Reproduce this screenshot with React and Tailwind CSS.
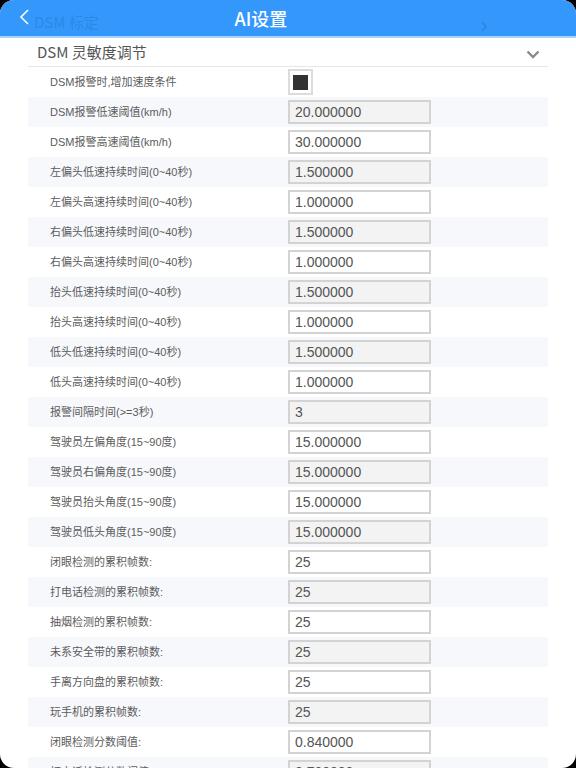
import React from "react";

const rows = [
  ["DSM报警时,增加速度条件", null],
  ["DSM报警低速阈值(km/h)", "20.000000"],
  ["DSM报警高速阈值(km/h)", "30.000000"],
  ["左偏头低速持续时间(0~40秒)", "1.500000"],
  ["左偏头高速持续时间(0~40秒)", "1.000000"],
  ["右偏头低速持续时间(0~40秒)", "1.500000"],
  ["右偏头高速持续时间(0~40秒)", "1.000000"],
  ["抬头低速持续时间(0~40秒)", "1.500000"],
  ["抬头高速持续时间(0~40秒)", "1.000000"],
  ["低头低速持续时间(0~40秒)", "1.500000"],
  ["低头高速持续时间(0~40秒)", "1.000000"],
  ["报警间隔时间(>=3秒)", "3"],
  ["驾驶员左偏角度(15~90度)", "15.000000"],
  ["驾驶员右偏角度(15~90度)", "15.000000"],
  ["驾驶员抬头角度(15~90度)", "15.000000"],
  ["驾驶员低头角度(15~90度)", "15.000000"],
  ["闭眼检测的累积帧数:", "25"],
  ["打电话检测的累积帧数:", "25"],
  ["抽烟检测的累积帧数:", "25"],
  ["未系安全带的累积帧数:", "25"],
  ["手离方向盘的累积帧数:", "25"],
  ["玩手机的累积帧数:", "25"],
  ["闭眼检测分数阈值:", "0.840000"],
  ["打电话检测分数阈值:", "0.700000"],
];

const font = { fontFamily: '"Liberation Sans", "Noto Sans CJK SC", sans-serif' };

export default function App() {
  return (
    <div className="w-[576px] h-[768px] bg-black overflow-hidden" style={font}>
      <div className="w-full h-full bg-white rounded-[14px] overflow-hidden flex flex-col">
        <div className="relative h-[38px] shrink-0 bg-[#3497fb] border-b-2 border-[#a9d3fb] flex items-center">
          <svg className="ml-[18px] mt-[-2px]" width="12" height="18" viewBox="0 0 12 18">
            <path d="M10 2 L3 9 L10 16" fill="none" stroke="#fff" strokeWidth="1.6" />
          </svg>
          <span className="ml-[4px] mt-[8px] text-[15px] text-[#2b89e8]" style={{ fontFamily: '"Noto Sans CJK SC", sans-serif' }}>DSM 标定</span>
          <div className="absolute inset-0 flex items-center justify-center pr-[54px]">
            <span className="text-white text-[18px] font-medium" style={{ fontFamily: '"Noto Sans CJK SC", sans-serif' }}>AI设置</span>
          </div>
          <svg className="absolute left-[480px] top-[21px]" width="8" height="11" viewBox="0 0 8 11">
            <path d="M2 1 L6 5.5 L2 10" fill="none" stroke="#2b89e8" strokeWidth="2" />
          </svg>
        </div>
        <div className="mx-[28px] flex flex-col">
          <div className="h-[29px] flex items-center justify-between border-b border-[#e6e6e6] pl-[9px] pr-[8px]">
            <span className="text-[15px] text-[#555] mt-[1px]" style={{ fontFamily: '"Noto Sans CJK SC", sans-serif' }}>DSM 灵敏度调节</span>
            <svg width="14" height="9" viewBox="0 0 14 9" className="mt-[4px]">
              <path d="M1.5 1.5 L7 7 L12.5 1.5" fill="none" stroke="#8a8a8a" strokeWidth="2.4" />
            </svg>
          </div>
          {rows.map(([label, value], i) => {
            const striped = i % 2 === 1;
            return (
              <div key={i} className={`h-[30px] shrink-0 flex items-center ${striped ? "bg-[#f7f8fc]" : "bg-white"}`}>
                <div className="w-[260px] pl-[22px] text-[11px] text-[#5c5c5c] leading-none">{label}</div>
                {value === null ? (
                  <div className="w-[25px] h-[26px] border-2 border-[#dcdcdc] bg-white flex items-center justify-center">
                    <div className="w-[15px] h-[15px] bg-[#333]" />
                  </div>
                ) : (
                  <div className={`w-[143px] h-[24px] border-2 border-[#d3d3d3] flex items-center pl-[5px] text-[14px] text-[#555] ${striped ? "bg-[#f3f3f3]" : "bg-white"}`} style={{ fontFamily: '"Liberation Sans", sans-serif' }}>
                    {value}
                  </div>
                )}
              </div>
            );
          })}
        </div>
      </div>
    </div>
  );
}
